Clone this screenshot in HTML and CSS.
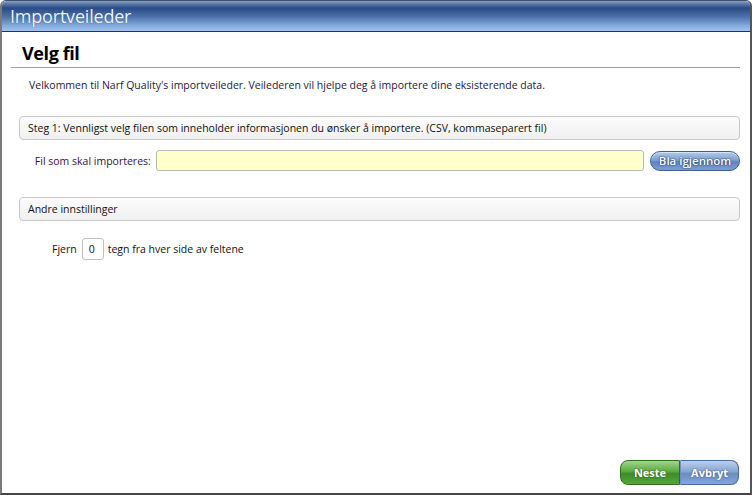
FILE: index.html
```html
<!DOCTYPE html>
<html>
<head>
<meta charset="utf-8">
<link rel="stylesheet" href="styles.css">
</head>
<body>
<div class="window">
  <div class="titlebar">Importveileder</div>
  <div class="content">
    <h1 class="heading">Velg fil</h1>
    <p class="intro">Velkommen til Narf Quality's importveileder. Veilederen vil hjelpe deg å importere dine eksisterende data.</p>
    <div class="section">Steg 1: Vennligst velg filen som inneholder informasjonen du ønsker å importere. (CSV, kommaseparert fil)</div>
    <div class="filerow">
      <label class="filelabel">Fil som skal importeres:</label>
      <div class="fileinput"></div>
      <button class="browse">Bla igjennom</button>
    </div>
    <div class="section section2">Andre innstillinger</div>
    <div class="trimrow">
      <span>Fjern</span>
      <span class="num">0</span>
      <span>tegn fra hver side av feltene</span>
    </div>
    <div class="spacer"></div>
    <div class="actions">
      <button class="btn next">Neste</button><button class="btn cancel">Avbryt</button>
    </div>
  </div>
</div>
</body>
</html>
```
FILE: styles.css
```css
html, body {
  margin: 0;
  padding: 0;
  width: 752px;
  height: 495px;
  overflow: hidden;
  background: #fff;
  font-family: "Open Sans", "DejaVu Sans", sans-serif;
}
.window {
  box-sizing: border-box;
  width: 752px;
  height: 495px;
  border-left: 2px solid #7a7a7a;
  border-right: 2px solid #555;
  border-bottom: 2px solid #444;
  border-top: 1px solid #3b4f6e;
  border-radius: 6px 6px 0 0;
  display: flex;
  flex-direction: column;
  overflow: hidden;
}
.titlebar {
  height: 31px;
  box-sizing: border-box;
  border-bottom: 1px solid #17336c;
  background: linear-gradient(#8ea2c0 0px, #5a77a6 3px, #2a4b86 7px, #4d72aa 16px, #86addf 25px, #a6c8f0 31px);
  color: #eef3fb;
  font-size: 18px;
  line-height: 30px;
  padding-left: 8px;
  text-shadow: 0 0 1px #2a4b86;
  letter-spacing: -0.2px;
}
.content {
  flex: 1;
  display: flex;
  flex-direction: column;
  padding: 0 10px 8px 9px;
}
.heading {
  margin: 9px 0 0 0;
  padding: 0 0 2px 11px;
  font-size: 18px;
  font-weight: bold;
  line-height: 24px;
  color: #000;
  border-bottom: 1px solid #a0a0a0;
  letter-spacing: -0.4px;
}
.intro {
  margin: 9px 0 0 18px;
  font-size: 10.5px;
  line-height: 16px;
  color: #1a1a40;
  letter-spacing: 0;
}
.section {
  margin: 23px 0 0 8px;
  height: 24px;
  box-sizing: border-box;
  border: 1px solid #c9c9c9;
  border-radius: 4px;
  background: linear-gradient(#fcfcfc, #f0f0f0);
  font-size: 10.5px;
  line-height: 22px;
  padding-left: 8px;
  color: #111;
  letter-spacing: 0;
}
.filerow {
  display: flex;
  align-items: center;
  margin-top: 10px;
  height: 21px;
}
.filelabel {
  width: 140px;
  text-align: right;
  font-size: 10.5px;
  color: #3a1040;
}
.fileinput {
  margin-left: 5px;
  width: 489px;
  height: 21px;
  box-sizing: border-box;
  border: 1px solid #b8b8b8;
  border-radius: 3px;
  background: #ffffcc;
}
.browse {
  margin-left: 6px;
  width: 90px;
  height: 20px;
  border: 1px solid #3f5f92;
  border-radius: 10px;
  background: linear-gradient(#b4cbea 0%, #7fa1d2 45%, #5f84bd 55%, #7d9fd2 100%);
  color: #fff;
  font-family: "Open Sans", "DejaVu Sans", sans-serif;
  font-size: 11.5px;
  font-weight: 600;
  padding: 0;
  text-shadow: 0 0 2px #1f3a6a, 0 0 1px #1f3a6a;
  box-shadow: inset 0 1px 0 rgba(255,255,255,0.5);
}
.section2 {
  margin-top: 26px;
}
.trimrow {
  display: flex;
  align-items: center;
  margin: 17px 0 0 41px;
  font-size: 10.5px;
  color: #111;
}
.num {
  width: 22px;
  height: 22px;
  box-sizing: border-box;
  border: 1px solid #c0c0c0;
  border-radius: 3px;
  margin: 0 4px 0 5px;
  padding-left: 6px;
  line-height: 20px;
}
.spacer {
  flex: 1;
}
.actions {
  display: flex;
  justify-content: flex-end;
  margin-right: 1px;
}
.btn {
  height: 25px;
  width: 60px;
  padding: 0;
  font-family: "Open Sans", "DejaVu Sans", sans-serif;
  font-size: 11px;
  font-weight: bold;
  color: #fff;
  text-shadow: 0 0 2px rgba(0,0,0,0.5);
  cursor: pointer;
}
.next {
  border: 1px solid #2f6f1f;
  border-radius: 8px 0 0 8px;
  background: linear-gradient(#9fd58a 0%, #5cab43 45%, #3d8d27 55%, #56a53c 100%);
}
.cancel {
  border: 1px solid #466a9e;
  border-left: 1px solid #6f8fbf;
  border-radius: 0 8px 8px 0;
  background: linear-gradient(#bcd0ec 0%, #87a6d4 45%, #6a8dc4 55%, #86a6d6 100%);
  width: 59px;
}
```
